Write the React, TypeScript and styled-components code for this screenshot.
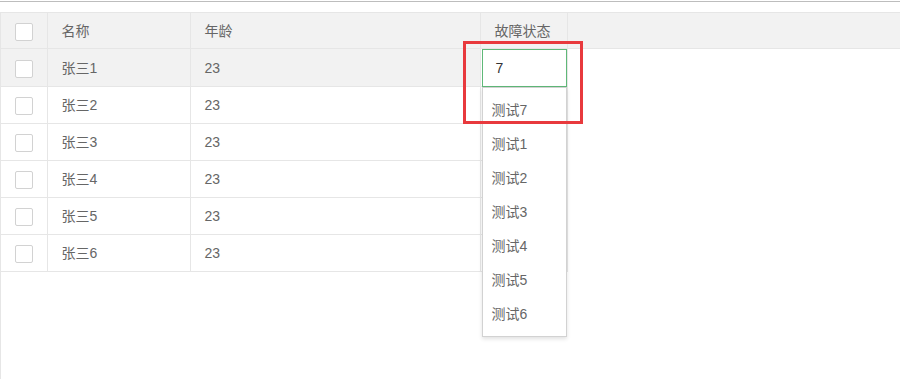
import styled, { createGlobalStyle } from 'styled-components';

const GlobalStyle = createGlobalStyle`
	html, body {
		margin: 0;
		padding: 0;
		background: #fff;
	}
	body {
		font-family: 'Liberation Sans', 'Noto Sans CJK SC', sans-serif;
		font-size: 14px;
		color: #666;
	}
`;

const Page = styled.div`
	position: relative;
	height: 379px;
	overflow: hidden;
`;

const TopRule = styled.div`
	margin-top: 1px;
	height: 1px;
	background: #bdbdbd;
`;

const TableView = styled.div`
	margin-top: 10px;
	height: 367px;
	border-left: 1px solid #e6e6e6;
`;

const HeaderBox = styled.div`
	background: #f2f2f2;
	border-top: 1px solid #e6e6e6;
	border-bottom: 1px solid #e6e6e6;
`;

const Table = styled.table`
	border-collapse: collapse;
	table-layout: fixed;
	width: 566px;
`;

const Cell = styled.td<{ $width?: number; $hover?: boolean }>`
	width: ${(p) => (p.$width ? `${p.$width}px` : 'auto')};
	height: 37px;
	padding: 0 14px;
	box-sizing: border-box;
	border-right: 1px solid #e6e6e6;
	border-bottom: 1px solid #e6e6e6;
	background: ${(p) => (p.$hover ? '#f2f2f2' : '#fff')};
	text-align: left;
	vertical-align: middle;
	white-space: nowrap;
	font-weight: normal;
	color: #666;
	line-height: 20px;
`;

const HeadCell = styled(Cell).attrs({ as: 'th' })`
	height: 35px;
	border-bottom: none;
	background: transparent;
`;

const CheckCell = styled(Cell)`
	padding: 0;
	text-align: center;
`;

const StatusCell = styled(Cell)`
	position: relative;
	padding: 0 0 0 1px;
	background: #fff;
	overflow: visible;
`;

const CheckBox = styled.span`
	display: inline-block;
	width: 16px;
	height: 16px;
	border: 1px solid #d2d2d2;
	border-radius: 2px;
	background: #fff;
	vertical-align: middle;
`;

const Input = styled.div`
	box-sizing: border-box;
	height: 38px;
	margin-bottom: -1px;
	border: 1px solid #5fb878;
	background: #fff;
	padding-left: 13px;
	line-height: 36px;
	color: #333;
	font-size: 14px;
`;

const Dropdown = styled.ul`
	position: absolute;
	left: 1px;
	right: 0;
	top: 38px;
	margin: 0;
	padding: 5px 0;
	list-style: none;
	background: #fff;
	border: 1px solid #d2d2d2;
	box-shadow: 0 2px 4px rgba(0, 0, 0, 0.12);
	z-index: 5;
`;

const Option = styled.li`
	padding: 0 9px;
	line-height: 34px;
	color: #666;
`;

const Callout = styled.div`
	position: absolute;
	left: 463px;
	top: 41px;
	width: 120px;
	height: 83px;
	box-sizing: border-box;
	border: 3px solid #e8393d;
	z-index: 10;
	pointer-events: none;
`;

const rows = [1, 2, 3, 4, 5, 6].map((n) => ({ id: n, name: `张三${n}`, age: 23 }));
const options = ['测试7', '测试1', '测试2', '测试3', '测试4', '测试5', '测试6'];

const App = () => {
	return (
		<Page>
			<GlobalStyle />
			<TopRule />
			<TableView>
				<HeaderBox>
					<Table>
						<thead>
							<tr>
								<HeadCell $width={46} style={{ padding: 0, textAlign: 'center' }}>
									<CheckBox />
								</HeadCell>
								<HeadCell $width={143}>名称</HeadCell>
								<HeadCell $width={290}>年龄</HeadCell>
								<HeadCell $width={87}>故障状态</HeadCell>
							</tr>
						</thead>
					</Table>
				</HeaderBox>
				<Table>
					<tbody>
						{rows.map((row, i) => (
							<tr key={row.id}>
								<CheckCell $width={46} $hover={i === 0}>
									<CheckBox />
								</CheckCell>
								<Cell $width={143} $hover={i === 0}>{row.name}</Cell>
								<Cell $width={290} $hover={i === 0}>{row.age}</Cell>
								<StatusCell $width={87}>
									{i === 0 && (
										<>
											<Input>7</Input>
											<Dropdown>
												{options.map((o) => (
													<Option key={o}>{o}</Option>
												))}
											</Dropdown>
										</>
									)}
								</StatusCell>
							</tr>
						))}
					</tbody>
				</Table>
			</TableView>
			<Callout />
		</Page>
	);
};

export default App;
